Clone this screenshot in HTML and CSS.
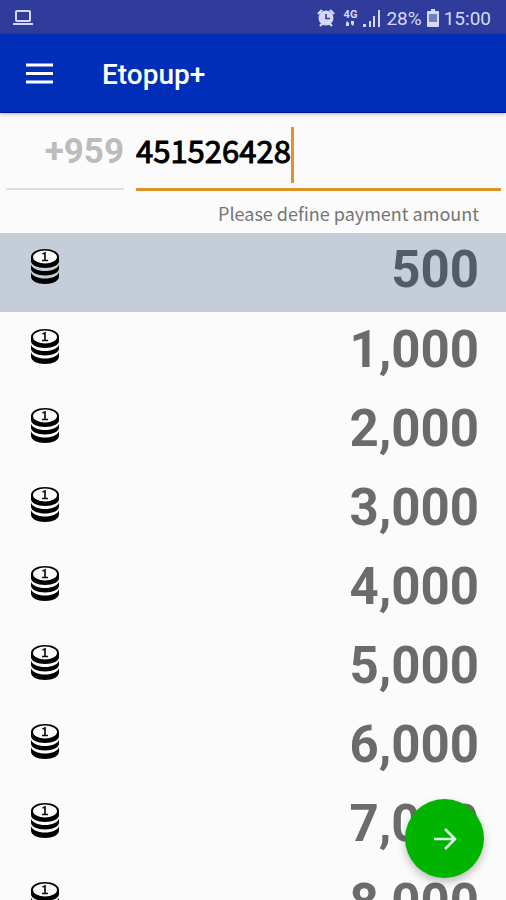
FILE: index.html
```html
<!DOCTYPE html>
<html lang="en">
<head>
<meta charset="utf-8">
<meta name="viewport" content="width=device-width, initial-scale=1">
<title>Etopup+</title>
<link rel="stylesheet" href="styles.css">
</head>
<body>
<svg class="defs" width="0" height="0" aria-hidden="true">
  <symbol id="coins" viewBox="0 0 28 35">
    <path d="M0 23v4.500c0 4.500 6 7.500 14 7.500s14-3 14-7.500V23c-1 4-7 6.500-14 6.500S1 27 0 23z" fill="#000"/>
    <path d="M0 15.500v4c0 4 6 7 14 7s14-3 14-7v-4c-1 4-7 6.500-14 6.500s-13-2.500-14-6.500z" fill="#000"/>
    <path d="M0 8v4c0 4 6 7 14 7s14-3 14-7V8C28 3.500 22 0 14 0S0 3.500 0 8z" fill="#000"/>
    <ellipse class="coin-face" cx="14" cy="8" rx="12" ry="6.500"/>
    <path d="M11.500 5l2.500-1v7.500M11 11.500h6" fill="none" stroke="#111" stroke-width="1.700"/>
  </symbol>
</svg>
<div class="status">
  <svg class="laptop" width="20" height="16" viewBox="0 0 20 16" fill="none" stroke="currentColor" stroke-width="2"><rect x="3" y="1" width="14" height="10" rx="1"/><path d="M0 14h20"/></svg>
  <div class="status-right">
    <svg width="18" height="18" viewBox="0 0 18 18"><circle cx="9" cy="9" r="7.500" fill="currentColor"/><path d="M1 5l4-4M17 5l-4-4M3 17l3-3M15 17l-3-3" stroke="currentColor" stroke-width="2.400"/><path d="M9 5v4.500h4" fill="none" stroke="#303c9c" stroke-width="1.600"/></svg>
    <span class="network"><span>4G</span><svg width="10" height="5" viewBox="0 0 10 5" fill="currentColor"><path d="M1 2l1-2 2 2v3H1zM6 0h3v3L8 5 6 3z"/></svg></span>
    <svg width="18" height="17" viewBox="0 0 18 17" fill="currentColor"><path d="M0 14h3v3H0zM6 11h2v6H6zM10 6h2v11h-2zM15 0h2v17h-2z"/></svg>
    <span>28%</span>
    <svg width="12" height="18" viewBox="0 0 12 18"><path d="M4 0h4v2h3a1 1 0 0 1 1 1v14a1 1 0 0 1-1 1H1a1 1 0 0 1-1-1V3a1 1 0 0 1 1-1h3z" fill="currentColor"/><path d="M2 5h8v8H2z" fill="#747dc0"/></svg>
    <span>15:00</span>
  </div>
</div>
<header class="appbar">
  <button class="menu" type="button" aria-label="Menu"><svg width="27" height="21" viewBox="0 0 27 21"><path d="M0 2h27M0 10.500h27M0 19h27" stroke="#fff" stroke-width="3"/></svg></button>
  <h1>Etopup+</h1>
</header>
<main>
  <div class="phone">
    <label class="prefix" for="phone">+959</label>
    <div class="number"><input id="phone" type="tel" value="451526428"><span class="caret"></span></div>
  </div>
  <p class="hint">Please define payment amount</p>
  <ul class="amounts">
    <li><button type="button" class="amount selected" aria-pressed="true"><svg class="coins"><use href="#coins"/></svg><span>500</span></button></li>
    <li><button type="button" class="amount"><svg class="coins"><use href="#coins"/></svg><span>1,000</span></button></li>
    <li><button type="button" class="amount"><svg class="coins"><use href="#coins"/></svg><span>2,000</span></button></li>
    <li><button type="button" class="amount"><svg class="coins"><use href="#coins"/></svg><span>3,000</span></button></li>
    <li><button type="button" class="amount"><svg class="coins"><use href="#coins"/></svg><span>4,000</span></button></li>
    <li><button type="button" class="amount"><svg class="coins"><use href="#coins"/></svg><span>5,000</span></button></li>
    <li><button type="button" class="amount"><svg class="coins"><use href="#coins"/></svg><span>6,000</span></button></li>
    <li><button type="button" class="amount"><svg class="coins"><use href="#coins"/></svg><span>7,000</span></button></li>
    <li><button type="button" class="amount"><svg class="coins"><use href="#coins"/></svg><span>8,000</span></button></li>
  </ul>
</main>
<button class="next" type="button" aria-label="Next"><svg width="24" height="24" viewBox="0 0 24 24" fill="none" stroke="#d8f8e0" stroke-width="2.600"><path d="M1 12h21M12 2l10 10-10 10"/></svg></button>
</body>
</html>
```

FILE: styles.css
```css
* {
  box-sizing: border-box;
}

body {
  margin: 0;
  height: 100vh;
  display: flex;
  flex-direction: column;
  overflow: hidden;
  background: #fbfbfb;
  font-family: Roboto, sans-serif;
}

button {
  border: 0;
  padding: 0;
  background: none;
  font: inherit;
  color: inherit;
}

svg {
  display: block;
  flex: none;
}

.defs {
  position: absolute;
}

.status {
  flex: none;
  height: 34px;
  padding: 2px 15px 0 13px;
  display: flex;
  align-items: center;
  justify-content: space-between;
  background: #303c9c;
  color: #d5d9f5;
  font-size: 19px;
}

.status-right {
  display: flex;
  align-items: center;
  gap: 5px;
}

.network {
  display: flex;
  flex-direction: column;
  align-items: center;
  gap: 1px;
  margin: 0 1px 0 4px;
  font-size: 11px;
  font-weight: 700;
  line-height: 10px;
}

.appbar {
  flex: none;
  height: 79px;
  padding: 0 26px;
  display: flex;
  align-items: center;
  gap: 49px;
  background: #002eb8;
  border-bottom: 1px solid #0014a0;
  box-shadow: 0 1px 4px #0000004d;
  position: relative;
}

.appbar h1 {
  margin: 0;
  padding-top: 3px;
  color: #fff;
  font-size: 28px;
  font-weight: 500;
  line-height: 32px;
}

main {
  flex: 1;
  min-height: 0;
  display: flex;
  flex-direction: column;
}

.phone {
  flex: none;
  display: flex;
  gap: 12px;
  height: 78px;
  padding: 0 5px 0 6px;
}

.prefix {
  width: 118px;
  padding-top: 18px;
  border-bottom: 2px solid #dedede;
  margin-bottom: 1px;
  color: #bcbcbc;
  font-size: 35px;
  font-weight: 700;
  line-height: 42px;
  text-align: right;
}

.number {
  flex: 1;
  display: flex;
  padding-top: 14px;
  border-bottom: 3px solid #dd952a;
}

.number input {
  width: 9ch;
  height: 44px;
  padding: 0;
  border: 0;
  outline: 0;
  background: none;
  color: #000;
  font-family: "Noto Sans CJK SC", sans-serif;
  font-size: 31px;
  font-weight: 400;
  -webkit-text-stroke: 1px #000;
}

.caret {
  width: 3px;
  height: 56px;
  background: #dd952a;
}

.hint {
  flex: none;
  height: 42px;
  margin: 0;
  padding: 8px 27px 0 0;
  color: #757575;
  font-family: "Noto Sans CJK SC", sans-serif;
  font-size: 18px;
  line-height: 28px;
  text-align: right;
}

.amounts {
  flex: 1;
  min-height: 0;
  margin: 0;
  padding: 0;
  overflow-y: auto;
  scrollbar-width: none;
  list-style: none;
}

.amount {
  width: 100%;
  height: 79px;
  padding: 0 27px 0 31px;
  display: flex;
  align-items: flex-start;
  justify-content: space-between;
  color: #6b6b6b;
  font-size: 51px;
  font-weight: 700;
  line-height: 73px;
}

.selected {
  margin-bottom: 1px;
  background: #c5ced8;
  color: #515d66;
}

.coins {
  width: 28px;
  height: 35px;
  margin-top: 16px;
}

.coin-face {
  fill: #fbfbfb;
}

.selected .coin-face {
  fill: #d5dce3;
}

.next {
  position: fixed;
  right: 22px;
  bottom: 22px;
  width: 79px;
  height: 79px;
  display: grid;
  place-items: center;
  border-radius: 50%;
  background: #00b400;
  box-shadow: 0 4px 8px #00000040;
}
```
